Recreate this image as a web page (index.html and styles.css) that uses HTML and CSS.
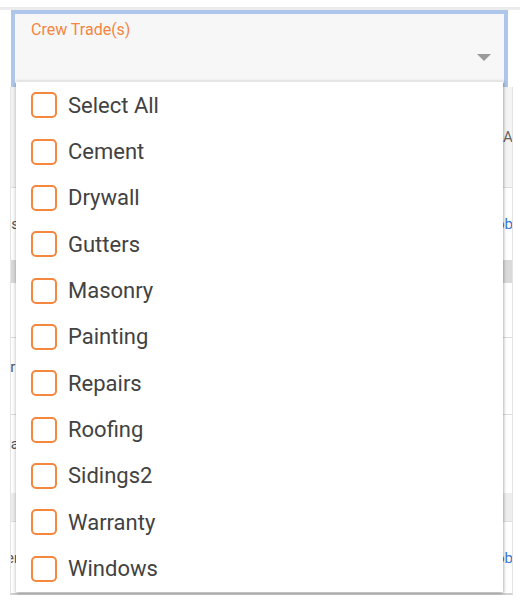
FILE: index.html
```html
<!DOCTYPE html>
<html>
<head>
<meta charset="utf-8">
<link rel="stylesheet" href="styles.css">
</head>
<body>
<div class="topbar"></div>
<div class="field-wrap">
  <div class="field">
    <div class="field-label">Crew Trade(s)</div>
    <span class="caret"></span>
  </div>
  <ul class="menu">
    <li class="opt"><span class="box"></span><span class="opt-text">Select All</span></li>
    <li class="opt"><span class="box"></span><span class="opt-text">Cement</span></li>
    <li class="opt"><span class="box"></span><span class="opt-text">Drywall</span></li>
    <li class="opt"><span class="box"></span><span class="opt-text">Gutters</span></li>
    <li class="opt"><span class="box"></span><span class="opt-text">Masonry</span></li>
    <li class="opt"><span class="box"></span><span class="opt-text">Painting</span></li>
    <li class="opt"><span class="box"></span><span class="opt-text">Repairs</span></li>
    <li class="opt"><span class="box"></span><span class="opt-text">Roofing</span></li>
    <li class="opt"><span class="box"></span><span class="opt-text">Sidings2</span></li>
    <li class="opt"><span class="box"></span><span class="opt-text">Warranty</span></li>
    <li class="opt"><span class="box"></span><span class="opt-text">Windows</span></li>
  </ul>
</div>
<div class="table">
  <div class="row head"><span class="frag-l"></span><span class="frag-r hdr">A</span></div>
  <div class="row r1"><span class="frag-l">es</span><span class="frag-r link">ob</span></div>
  <div class="band dark"></div>
  <div class="row r2"><span class="frag-l"></span><span class="frag-r"></span></div>
  <div class="row r3 up"><span class="frag-l">Tri</span><span class="frag-r"></span></div>
  <div class="row r4 up"><span class="frag-l">Dca</span><span class="frag-r"></span></div>
  <div class="band light"></div>
  <div class="row r5"><span class="frag-l">Ter</span><span class="frag-r link">ob</span></div>
</div>
</body>
</html>
```

FILE: styles.css
```css
* { box-sizing: border-box; }

body {
  margin: 0;
  font-family: Roboto, "Liberation Sans", sans-serif;
  background: #ffffff;
}

.topbar {
  height: 10px;
  border-bottom: 3px solid #ececec;
}

.field-wrap {
  position: relative;
  margin-left: 11px;
  width: 497px;
}

.field {
  height: 77px;
  border: 4px solid #aec6e9;
  background: #f7f7f7;
  display: flex;
  flex-direction: column;
  padding: 6px 13px 0 16px;
}

.field-label {
  font-size: 16px;
  line-height: 19px;
  color: #f5853f;
}

.caret {
  align-self: flex-end;
  margin-top: 15px;
  width: 0;
  height: 0;
  border-left: 7px solid transparent;
  border-right: 7px solid transparent;
  border-top: 7px solid #9a9a9a;
}

.menu {
  position: absolute;
  left: 5px;
  top: 71px;
  width: 487px;
  margin: 0;
  padding: 0;
  list-style: none;
  background: #ffffff;
  border-top: 1px solid #e6e6e6;
  box-shadow: 0 2px 4px rgba(0, 0, 0, 0.28), 1px 0 2px rgba(0, 0, 0, 0.12);
  z-index: 5;
}

.opt {
  height: 46.35px;
  display: flex;
  align-items: center;
  padding-left: 15px;
  gap: 11px;
}

.box {
  width: 26px;
  height: 26px;
  border: 2.6px solid #f5873f;
  border-radius: 5px;
  flex: none;
}

.opt-text {
  font-size: 22px;
  color: #424242;
}

.table {
  margin-left: 10px;
  width: 503px;
  border-left: 1px solid #e4e4e4;
  border-right: 1px solid #e4e4e4;
  border-bottom: 2px solid #d2d2d2;
}

.row {
  display: flex;
  justify-content: space-between;
  align-items: center;
  border-bottom: 1px solid #dddddd;
}

.row.up { align-items: flex-start; padding-top: 20px; }

.head { height: 101px; background: #f4f4f4; }
.r1 { height: 72px; border-bottom: none; }
.band { border: none; }
.band.dark { height: 23px; background: #dadada; }
.band.light { height: 29px; background: #eeeeee; border-bottom: 1px solid #e0e0e0; }
.r2 { height: 55px; }
.r3 { height: 77px; }
.r4 { height: 78px; border-bottom: none; }
.r5 { height: 71px; border-bottom: none; }

.frag-l {
  width: 8px;
  overflow: hidden;
  display: flex;
  justify-content: flex-end;
  white-space: nowrap;
  font-size: 15px;
  color: #555555;
}

.frag-r {
  width: 14px;
  overflow: hidden;
  white-space: nowrap;
  font-size: 15px;
  color: #555555;
  padding-left: 5px;
}

.frag-r.link {
  width: 16px;
  color: #3b7bd4;
  padding-left: 0;
}

.frag-r.hdr {
  color: #666666;
}
```
